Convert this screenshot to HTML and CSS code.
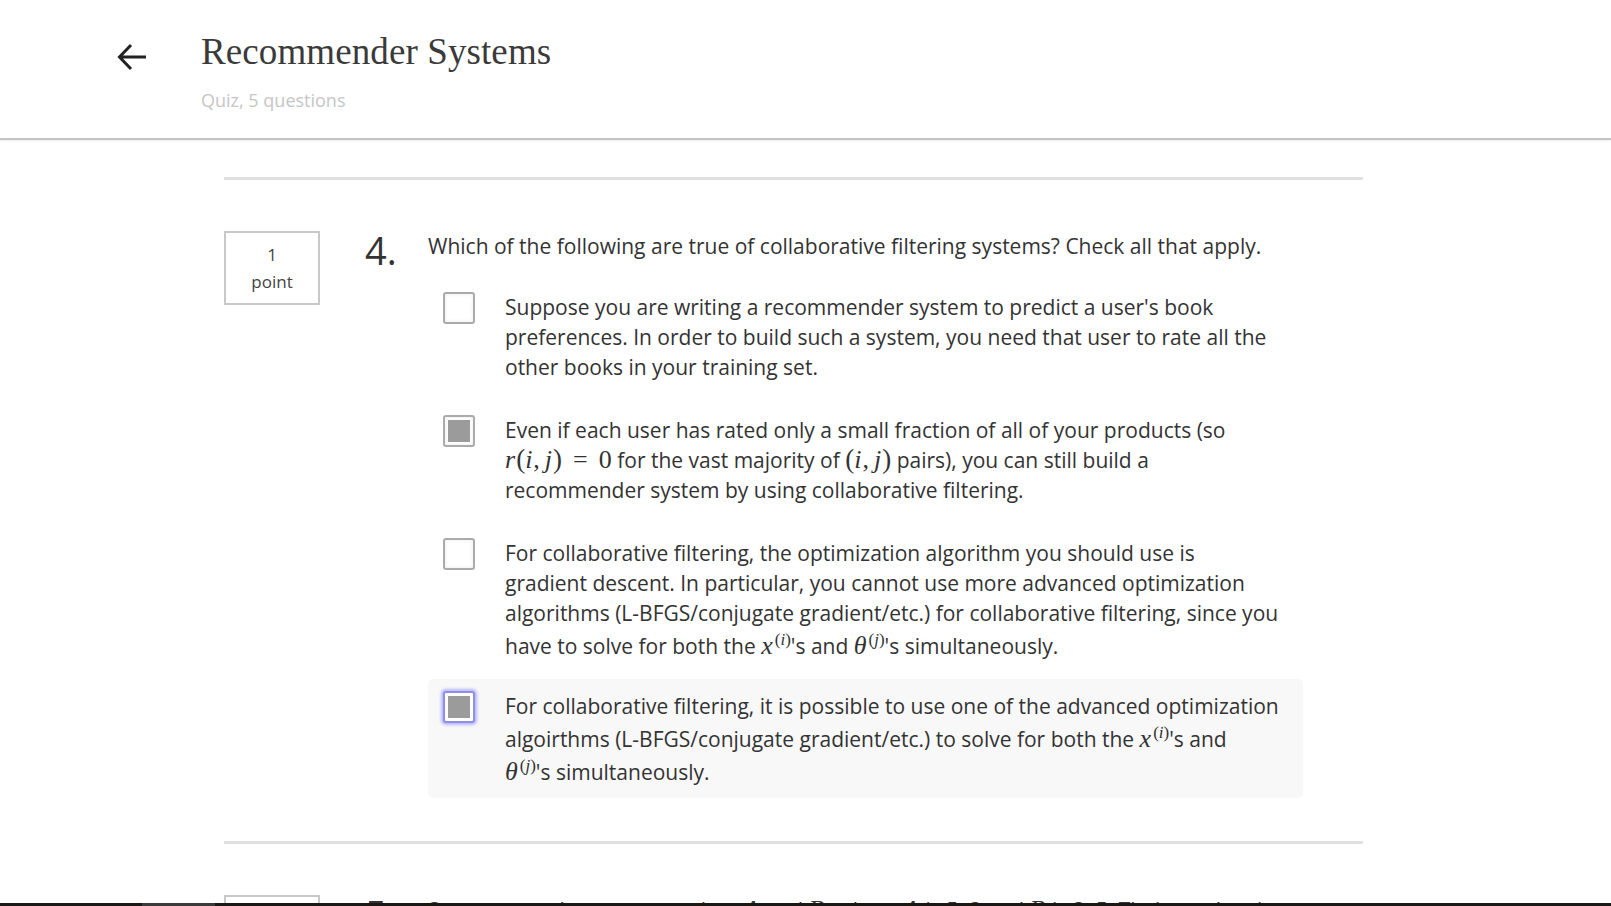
FILE: index.html
```html
<!DOCTYPE html>
<html lang="en">
<head>
<meta charset="utf-8">
<title>Recommender Systems</title>
<link rel="stylesheet" href="styles.css">
</head>
<body>
<header class="header">
  <a class="back" href="#" aria-label="Back">
    <svg width="30" height="28" viewBox="0 0 30 28"><path d="M3 14 H29 M14 2 L2.5 14 L14 26" fill="none" stroke="#222" stroke-width="3" stroke-linejoin="miter"/></svg>
  </a>
  <div class="titles">
    <h1 class="title">Recommender Systems</h1>
    <div class="subtitle">Quiz, 5 questions</div>
  </div>
</header>

<main class="main">
  <div class="separator"></div>
  <section class="question">
    <div class="points"><span>1</span><span>point</span></div>
    <div class="qnum">4.</div>
    <div class="qbody">
      <div class="qtext">Which of the following are true of collaborative filtering systems? Check all that apply.</div>
      <div class="options">
        <label class="option">
          <span class="box"></span>
          <span class="otext">Suppose you are writing a recommender system to predict a user's book<br>preferences. In order to build such a system, you need that user to rate all the<br>other books in your training set.</span>
        </label>
        <label class="option">
          <span class="box checked"></span>
          <span class="otext">Even if each user has rated only a small fraction of all of your products (so<br><span class="math"><i>r</i><span class="p">(</span><i>i</i>,<span class="thin"></span><i>j</i><span class="p">)</span><span class="rel">=</span>0</span> for the vast majority of <span class="math"><span class="p">(</span><i>i</i>,<span class="thin"></span><i>j</i><span class="p">)</span></span> pairs), you can still build a<br>recommender system by using collaborative filtering.</span>
        </label>
        <label class="option">
          <span class="box"></span>
          <span class="otext">For collaborative filtering, the optimization algorithm you should use is<br>gradient descent. In particular, you cannot use more advanced optimization<br>algorithms (L-BFGS/conjugate gradient/etc.) for collaborative filtering, since you<br>have to solve for both the <span class="math"><i>x</i><sup>(<i>i</i>)</sup></span>'s and <span class="math"><i>θ</i><sup>(<i>j</i>)</sup></span>'s simultaneously.</span>
        </label>
        <label class="option focused">
          <span class="box checked focus"></span>
          <span class="otext">For collaborative filtering, it is possible to use one of the advanced optimization<br>algoirthms (L-BFGS/conjugate gradient/etc.) to solve for both the <span class="math"><i>x</i><sup>(<i>i</i>)</sup></span>'s and<br><span class="math"><i>θ</i><sup>(<i>j</i>)</sup></span>'s simultaneously.</span>
        </label>
      </div>
    </div>
  </section>
  <div class="separator"></div>
  <section class="question">
    <div class="points"><span>1</span><span>point</span></div>
    <div class="qnum">5.</div>
    <div class="qbody">
      <div class="qtext">Suppose you have two matrices <span class="math"><i>A</i></span> and <span class="math"><i>B</i></span>, where <span class="math"><i>A</i></span> is 5x3 and <span class="math"><i>B</i></span> is 3x5. Their product is <span class="math"><i>C</i> = <i>AB</i></span>, a 5x5 matrix.</div>
    </div>
  </section>
</main>

<div class="hscroll"><div class="thumb"></div></div>
</body>
</html>
```

FILE: styles.css
```css
html, body {
  margin: 0;
  padding: 0;
  background: #fff;
}
body {
  font-family: "Open Sans", "Noto Sans", sans-serif;
  color: #333;
  overflow: hidden;
}
.header {
  display: flex;
  align-items: flex-start;
  height: 138px;
  padding-left: 117px;
  border-bottom: 2px solid #c4c4c4;
  box-shadow: 0 1px 2px rgba(0,0,0,0.08);
  box-sizing: content-box;
}
.back {
  display: block;
  width: 30px;
  height: 28px;
  margin-top: 43px;
}
.back svg { display: block; }
.titles {
  margin-left: 54px;
  padding-top: 31px;
}
.title {
  margin: 0;
  font-family: "Liberation Serif", "Times New Roman", serif;
  font-weight: normal;
  font-size: 37px;
  line-height: 42px;
  color: #3a3a3a;
  letter-spacing: 0.1px;
}
.subtitle {
  margin-top: 15px;
  font-size: 18px;
  line-height: 24px;
  color: #c6c6c6;
}
.main {
  margin-left: 224px;
  width: 1139px;
  padding-top: 37px;
}
.separator {
  height: 3px;
  background: #e1e1e1;
}
.question {
  display: flex;
  align-items: flex-start;
  padding: 51px 0 43px;
}
.points {
  box-sizing: border-box;
  width: 96px;
  height: 74px;
  border: 2px solid #c8c8c8;
  display: flex;
  flex-direction: column;
  align-items: center;
  padding-top: 8px;
  font-size: 17px;
  line-height: 27px;
  color: #444;
}
.qnum {
  margin-left: 45px;
  width: 63px;
  font-size: 38px;
  line-height: 38px;
  color: #333;
}
.qbody {
  width: 875px;
}
.qtext {
  font-size: 21px;
  line-height: 30px;
}
.options {
  display: flex;
  flex-direction: column;
  gap: 12px;
  margin-top: 21px;
}
.option {
  display: flex;
  align-items: flex-start;
  padding: 10px 0 11px 15px;
  border-radius: 5px;
}
.option.focused {
  background: #f8f8f8;
  margin-top: -5px;
  padding-top: 12px;
}
.box {
  position: relative;
  flex: none;
  box-sizing: border-box;
  width: 32px;
  height: 32px;
  border: 2px solid #ababab;
  border-radius: 3px;
  background: #fff;
  box-shadow: inset 0 0 4px rgba(0,0,0,0.08);
}
.box.checked::after {
  content: "";
  position: absolute;
  left: 3px;
  top: 3px;
  right: 3px;
  bottom: 3px;
  background: #9b9b9b;
}
.box.focus {
  border-color: #8f8fe8;
  box-shadow: 0 0 3px 2px rgba(130,130,255,0.55);
}
.otext {
  margin-left: 30px;
  font-size: 21px;
  line-height: 30px;
  color: #333;
  white-space: nowrap;
}
.math {
  font-family: "Liberation Serif", "Times New Roman", serif;
  font-size: 26px;
  line-height: 0;
  white-space: nowrap;
}
.math i {
  font-style: italic;
  margin-right: 1px;
}
.math .p {
  font-size: 27px;
}
.math .thin {
  display: inline-block;
  width: 5px;
}
.math .rel {
  margin: 0 11px;
}
.math sup {
  font-size: 17px;
  vertical-align: 9px;
  line-height: 24px;
  margin-left: 1px;
}
.math sup i {
  margin-right: 0;
}
.hscroll {
  position: fixed;
  left: 0;
  right: 0;
  bottom: 0;
  height: 3px;
  background: #1a1714;
}
.hscroll .thumb {
  position: absolute;
  left: 142px;
  width: 73px;
  top: 0;
  bottom: 0;
  background: #3a3a3a;
}
```
